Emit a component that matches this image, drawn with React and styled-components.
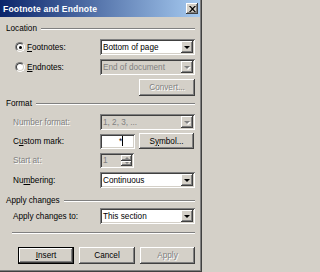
import React from "react";
import styled, { createGlobalStyle, css } from "styled-components";

const Global = createGlobalStyle`
  html, body { margin: 0; padding: 0; background: #D4D0C8; }
  body { font-family: "Liberation Sans", Arial, sans-serif; }
`;

const raised = css`
  background: #D4D0C8;
  box-shadow: inset -1px -1px #404040, inset 1px 1px #FFFFFF, inset -2px -2px #808080, inset 2px 2px #D4D0C8;
`;
const sunken = css`
  box-shadow: inset 1px 1px #808080, inset -1px -1px #FFFFFF, inset 2px 2px #404040, inset -2px -2px #D4D0C8;
`;

const Window = styled.div`
  width: 202px;
  height: 272px;
  box-sizing: border-box;
  background: #D4D0C8;
  box-shadow: inset -1px -1px #404040, inset -2px -2px #808080;
  display: flex;
  flex-direction: column;
  font-family: "Liberation Sans", Arial, sans-serif;
  font-size: 8.2px;
  color: #000;
  overflow: hidden;
`;

const TitleBar = styled.div`
  height: 17px;
  margin-right: 2px;
  background: linear-gradient(to right, #0A246A, #A6CAF0);
  display: flex;
  align-items: center;
  padding-left: 3px;
  padding-right: 2px;
  box-sizing: border-box;
`;

const TitleText = styled.span`
  flex: 1;
  color: #fff;
  font-weight: bold;
  font-size: 8.6px;
  letter-spacing: 0.15px;
`;

const CloseBtn = styled.div`
  ${raised};
  width: 12px;
  height: 11px;
  display: flex;
  align-items: center;
  justify-content: center;
`;

const Content = styled.div`
  padding: 0 6px;
  display: flex;
  flex-direction: column;
`;

const Heading = styled.div`
  display: flex;
  align-items: center;
  height: 9px;
  margin-top: ${(p) => p.$mt}px;
  line-height: 9px;
`;

const HeadLine = styled.div`
  flex: 1;
  margin-left: 4px;
  margin-right: 1px;
  border-top: 1px solid #808080;
  border-bottom: 1px solid #FFFFFF;
`;

const Row = styled.div`
  display: flex;
  align-items: center;
  height: ${(p) => p.$h || 16}px;
  margin-top: ${(p) => p.$mt}px;
`;

const Label = styled.div`
  width: 94px;
  box-sizing: border-box;
  padding-left: ${(p) => (p.$radio ? 9 : 7)}px;
  display: flex;
  align-items: center;
  gap: 2px;
  color: ${(p) => (p.$disabled ? "#808080" : "#000")};
  text-shadow: ${(p) => (p.$disabled ? "1px 1px #FFFFFF" : "none")};
  white-space: nowrap;
`;

const U = styled.span`
  text-decoration: underline;
`;

const RadioCircle = styled.div`
  width: 10px;
  height: 10px;
  border-radius: 50%;
  background: #fff;
  box-sizing: border-box;
  border: 1px solid;
  border-color: #808080 #FFFFFF #FFFFFF #808080;
  position: relative;
  flex: none;
  &::before {
    content: "";
    position: absolute;
    inset: 0;
    border-radius: 50%;
    border: 1px solid;
    border-color: #404040 #D4D0C8 #D4D0C8 #404040;
  }
  ${(p) =>
    p.$checked &&
    css`
      &::after {
        content: "";
        position: absolute;
        left: 2.5px;
        top: 2.5px;
        width: 3px;
        height: 3px;
        border-radius: 50%;
        background: #000;
      }
    `}
`;

const Combo = styled.div`
  ${sunken};
  background: ${(p) => (p.$disabled ? "#D4D0C8" : "#FFFFFF")};
  color: ${(p) => (p.$disabled ? "#808080" : "#000")};
  width: ${(p) => p.$w || 95}px;
  height: ${(p) => p.$h || 16}px;
  box-sizing: border-box;
  padding: 2px;
  display: flex;
  align-items: center;
`;

const ComboText = styled.div`
  flex: 1;
  padding-left: 1px;
  white-space: nowrap;
  overflow: hidden;
`;

const DropBtn = styled.div`
  ${raised};
  width: 12px;
  height: 12px;
  display: flex;
  align-items: center;
  justify-content: center;
  flex: none;
`;

const Arrow = styled.div`
  width: 0;
  height: 0;
  border-left: 3px solid transparent;
  border-right: 3px solid transparent;
  border-top: 3px solid ${(p) => (p.$disabled ? "#808080" : "#000")};
  ${(p) => p.$disabled && css`filter: drop-shadow(1px 1px 0 #fff);`}
`;

const UpArrow = styled.div`
  width: 0;
  height: 0;
  border-left: 2px solid transparent;
  border-right: 2px solid transparent;
  border-bottom: 2px solid #808080;
`;
const DownArrow = styled.div`
  width: 0;
  height: 0;
  border-left: 2px solid transparent;
  border-right: 2px solid transparent;
  border-top: 2px solid #808080;
`;

const Button = styled.div`
  ${raised};
  width: ${(p) => p.$w || 56}px;
  height: ${(p) => p.$h || 17}px;
  box-sizing: border-box;
  display: flex;
  align-items: center;
  justify-content: center;
  color: ${(p) => (p.$disabled ? "#808080" : "#000")};
  text-shadow: ${(p) => (p.$disabled ? "1px 1px #FFFFFF" : "none")};
  ${(p) =>
    p.$default &&
    css`
      box-shadow: inset 0 0 0 1px #000, inset -2px -2px #404040, inset 2px 2px #FFFFFF,
        inset -3px -3px #808080;
    `}
`;

const RightAlign = styled.div`
  display: flex;
  justify-content: flex-end;
  padding-right: 1px;
  margin-top: ${(p) => p.$mt}px;
`;

const TextBox = styled.div`
  ${sunken};
  background: #fff;
  width: 35px;
  height: 15px;
  box-sizing: border-box;
  display: flex;
  align-items: center;
  padding-left: 19px;
`;

const Caret = styled.div`
  width: 1px;
  height: 10px;
  background: #000;
`;

const Spin = styled.div`
  ${sunken};
  background: #D4D0C8;
  color: #808080;
  width: 34px;
  height: 15px;
  box-sizing: border-box;
  padding: 2px;
  display: flex;
  align-items: center;
`;

const SpinBtns = styled.div`
  display: flex;
  flex-direction: column;
  width: 11px;
  height: 11px;
`;

const SpinBtn = styled.div`
  ${raised};
  flex: 1;
  display: flex;
  align-items: center;
  justify-content: center;
`;

const Gap = styled.div`
  width: ${(p) => p.$w}px;
  flex: none;
`;

const Separator = styled.div`
  margin: ${(p) => p.$mt}px 7px 0 12px;
  border-top: 1px solid #808080;
  border-bottom: 1px solid #FFFFFF;
`;

const ButtonRow = styled.div`
  display: flex;
  gap: 5px;
  margin-top: 13px;
  padding-left: 18px;
`;

function ComboBox({ value, disabled }) {
  return (
    <Combo $disabled={disabled}>
      <ComboText>{value}</ComboText>
      <DropBtn>
        <Arrow $disabled={disabled} />
      </DropBtn>
    </Combo>
  );
}

export default function App() {
  return (
    <>
      <Global />
      <Window>
        <TitleBar>
          <TitleText>Footnote and Endnote</TitleText>
          <CloseBtn>
            <svg width="7" height="6" viewBox="0 0 7 6">
              <path d="M0 0h1.5L3.5 2 5.5 0H7L4.3 3 7 6H5.5L3.5 4 1.5 6H0l2.7-3z" fill="#000" />
            </svg>
          </CloseBtn>
        </TitleBar>
        <Content>
          <Heading $mt={7}>
            Location
            <HeadLine />
          </Heading>
          <Row $mt={6}>
            <Label $radio>
              <RadioCircle $checked />
              <span>
                <U>F</U>ootnotes:
              </span>
            </Label>
            <ComboBox value="Bottom of page" />
          </Row>
          <Row $mt={4}>
            <Label $radio>
              <RadioCircle />
              <span>
                <U>E</U>ndnotes:
              </span>
            </Label>
            <ComboBox value="End of document" disabled />
          </Row>
          <RightAlign $mt={4}>
            <Button $disabled>Convert...</Button>
          </RightAlign>
          <Heading $mt={3}>
            Format
            <HeadLine />
          </Heading>
          <Row $mt={6}>
            <Label $disabled>Number format:</Label>
            <ComboBox value="1, 2, 3, ..." disabled />
          </Row>
          <Row $mt={3} $h={16}>
            <Label>
              <span>
                C<U>u</U>stom mark:
              </span>
            </Label>
            <TextBox>
              *<Caret />
            </TextBox>
            <Gap $w={4} />
            <Button $w={55} $h={16}>
              S<U>y</U>mbol...
            </Button>
          </Row>
          <Row $mt={4} $h={15}>
            <Label $disabled>Start at:</Label>
            <Spin>
              <ComboText>1</ComboText>
              <SpinBtns>
                <SpinBtn>
                  <UpArrow />
                </SpinBtn>
                <SpinBtn>
                  <DownArrow />
                </SpinBtn>
              </SpinBtns>
            </Spin>
          </Row>
          <Row $mt={4}>
            <Label>
              <span>
                Nu<U>m</U>bering:
              </span>
            </Label>
            <ComboBox value="Continuous" />
          </Row>
          <Heading $mt={8}>
            Apply changes
            <HeadLine />
          </Heading>
          <Row $mt={3}>
            <Label>Apply changes to:</Label>
            <ComboBox value="This section" />
          </Row>
        </Content>
        <Separator $mt={8} />
        <ButtonRow>
          <Button $default>
            <span>
              <U>I</U>nsert
            </span>
          </Button>
          <Button>Cancel</Button>
          <Button $w={55} $disabled>
            Apply
          </Button>
        </ButtonRow>
      </Window>
    </>
  );
}
